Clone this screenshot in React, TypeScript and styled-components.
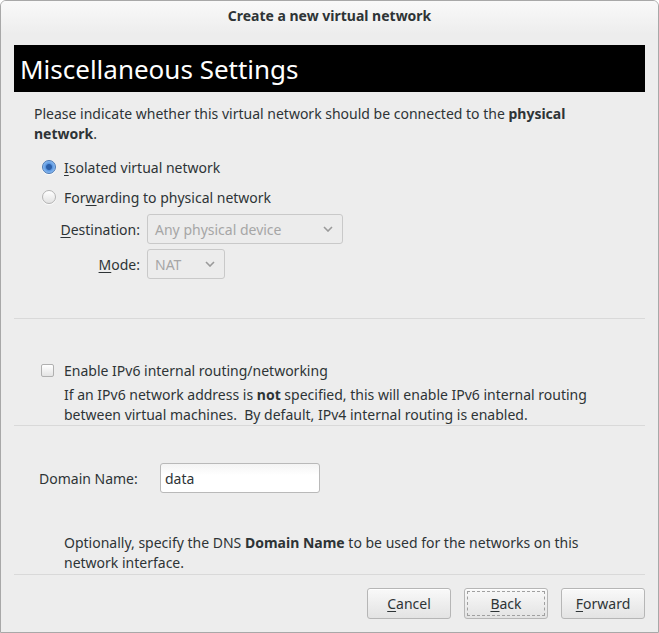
import React from "react";
import styled, { createGlobalStyle } from "styled-components";

const GlobalStyle = createGlobalStyle`
  html, body {
    margin: 0;
    padding: 0;
    background: #ffffff;
  }
  body {
    font-family: "Noto Sans", "Open Sans", "DejaVu Sans", sans-serif;
    font-size: 14px;
    color: #2e3436;
  }
`;

const Window = styled.div`
  width: 659px;
  height: 633px;
  box-sizing: border-box;
  border: 1px solid #a8a8a8;
  border-radius: 6px 6px 0 0;
  background: #ededed;
  display: flex;
  flex-direction: column;
  overflow: hidden;
`;

const TitleBar = styled.div`
  height: 33px;
  box-sizing: border-box;
  flex-shrink: 0;
  display: flex;
  align-items: center;
  justify-content: center;
  background: linear-gradient(#f9f9f9, #ededed);
  font-weight: 700;
  font-size: 14px;
  color: #2e3436;
  padding-bottom: 5px;
`;

const Body = styled.div`
  flex: 1;
  display: flex;
  flex-direction: column;
  padding: 0 13px;
`;

const Banner = styled.div`
  margin-top: 11px;
  height: 47px;
  background: #000;
  color: #fff;
  font-size: 26px;
  font-weight: 400;
  display: flex;
  align-items: center;
  padding-left: 6px;
  padding-top: 1px;
  box-sizing: border-box;
  flex-shrink: 0;
`;

const Para = styled.p<{ $indent: number; $gap?: number }>`
  margin: ${(p) => p.$gap ?? 0}px 0 0 0;
  padding-left: ${(p) => p.$indent}px;
  padding-right: 20px;
  line-height: 20px;
`;

const Section = styled.div<{ $top: number }>`
  margin-top: ${(p) => p.$top}px;
  display: flex;
  flex-direction: column;
  flex-shrink: 0;
`;

const RadioRow = styled.label`
  height: 30px;
  display: flex;
  align-items: center;
  gap: 8px;
  padding-left: 28px;
`;

const Radio = styled.span<{ $on?: boolean }>`
  width: 12px;
  height: 12px;
  border-radius: 50%;
  border: 1px solid ${(p) => (p.$on ? "#4a78b4" : "#b4b4b4")};
  background: ${(p) =>
    p.$on
      ? "radial-gradient(circle at 50% 50%, #2c5fa8 0 2.5px, #5a96e0 3.5px, #8cbcf2 6px)"
      : "linear-gradient(#ffffff, #e2e2e2)"};
  box-shadow: 0 1px 1px rgba(255, 255, 255, 0.8);
  flex-shrink: 0;
`;

const Mnemonic = styled.span`
  text-decoration: underline;
  text-underline-offset: 2px;
`;

const OptionGrid = styled.div`
  display: grid;
  grid-template-columns: 77px auto;
  column-gap: 7px;
  row-gap: 5px;
  padding-left: 49px;
  margin-top: 2px;
  align-items: center;
  justify-items: start;
`;

const FieldLabel = styled.span`
  justify-self: end;
`;

const Combo = styled.div<{ $w: number }>`
  width: ${(p) => p.$w}px;
  height: 30px;
  box-sizing: border-box;
  border: 1px solid #c9c9c9;
  border-radius: 3px;
  background: #ececec;
  color: #a6a6a6;
  display: flex;
  align-items: center;
  justify-content: space-between;
  padding: 0 9px 0 7px;
`;

const Separator = styled.div<{ $top: number }>`
  margin-top: ${(p) => p.$top}px;
  height: 1px;
  background: #d9d9d9;
  flex-shrink: 0;
`;

const CheckRow = styled.label`
  height: 20px;
  display: flex;
  align-items: center;
  gap: 10px;
  padding-left: 27px;
`;

const Check = styled.span`
  width: 11px;
  height: 11px;
  border: 1px solid #b0b0b0;
  border-radius: 2px;
  background: linear-gradient(#ffffff, #e4e4e4);
  flex-shrink: 0;
`;

const DomainRow = styled.div`
  display: flex;
  align-items: center;
  padding-left: 25px;
`;

const DomainLabel = styled.span`
  width: 121px;
`;

const Entry = styled.div`
  width: 160px;
  height: 30px;
  box-sizing: border-box;
  border: 1px solid #b9b9b9;
  border-radius: 3px;
  background: linear-gradient(#f4f4f4, #ffffff 40%);
  display: flex;
  align-items: center;
  padding-left: 4px;
`;

const ButtonBar = styled.div`
  margin-top: 13px;
  display: flex;
  justify-content: flex-end;
  gap: 13px;
`;

const Button = styled.button<{ $focus?: boolean }>`
  width: 84px;
  height: 31px;
  font: inherit;
  color: #2e3436;
  border: 1px solid #b6b6b6;
  border-radius: 3px;
  background: linear-gradient(#f9f9f9, #e3e3e3);
  box-shadow: inset 0 1px 0 #ffffff;
  padding: 0 0 1px 0;
  outline: ${(p) => (p.$focus ? "1px dashed #a0a0a0" : "none")};
  outline-offset: -4px;
`;

const Chevron = () => (
  <svg width="10" height="6" viewBox="0 0 10 6">
    <polyline points="1,1 5,5 9,1" fill="none" stroke="#9a9a9a" strokeWidth="1.6" />
  </svg>
);

export default function App() {
  return (
    <>
      <GlobalStyle />
      <Window>
        <TitleBar>Create a new virtual network</TitleBar>
        <Body>
          <Banner>Miscellaneous Settings</Banner>

          <Section $top={12}>
            <Para $indent={20}>
              Please indicate whether this virtual network should be connected to the <b>physical</b>{" "}
              <b>network</b>.
            </Para>
          </Section>

          <Section $top={8}>
            <RadioRow>
              <Radio $on />
              <span>
                <Mnemonic>I</Mnemonic>solated virtual network
              </span>
            </RadioRow>
            <RadioRow>
              <Radio />
              <span>
                For<Mnemonic>w</Mnemonic>arding to physical network
              </span>
            </RadioRow>
            <OptionGrid>
              <FieldLabel>
                <Mnemonic>D</Mnemonic>estination:
              </FieldLabel>
              <Combo $w={196}>
                <span>Any physical device</span>
                <Chevron />
              </Combo>
              <FieldLabel>
                <Mnemonic>M</Mnemonic>ode:
              </FieldLabel>
              <Combo $w={78}>
                <span>NAT</span>
                <Chevron />
              </Combo>
            </OptionGrid>
          </Section>

          <Separator $top={39} />

          <Section $top={41}>
            <CheckRow>
              <Check />
              <span>Enable IPv6 internal routing/networking</span>
            </CheckRow>
            <Para $indent={50} $gap={5}>
              If an IPv6 network address is <b>not</b> specified, this will enable IPv6 internal routing
              between virtual machines.&nbsp; By default, IPv4 internal routing is enabled.
            </Para>
          </Section>

          <Separator $top={0} />

          <Section $top={37}>
            <DomainRow>
              <DomainLabel>Domain Name:</DomainLabel>
              <Entry>data</Entry>
            </DomainRow>
          </Section>

          <Section $top={40}>
            <Para $indent={50}>
              Optionally, specify the DNS <b>Domain Name</b> to be used for the networks on this network interface.
            </Para>
          </Section>

          <Separator $top={1} />

          <ButtonBar>
            <Button>
              <Mnemonic>C</Mnemonic>ancel
            </Button>
            <Button $focus>
              <Mnemonic>B</Mnemonic>ack
            </Button>
            <Button>
              <Mnemonic>F</Mnemonic>orward
            </Button>
          </ButtonBar>
        </Body>
      </Window>
    </>
  );
}
